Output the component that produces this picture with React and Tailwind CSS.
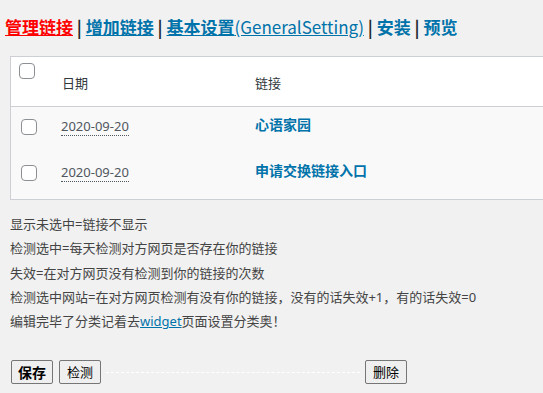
import React from "react";

const font = { fontFamily: '"Noto Sans", "Noto Sans CJK SC", sans-serif' };
const titleFont = { fontFamily: '"Noto Sans CJK SC", "Noto Sans", sans-serif' };

function Box({ className = "" }) {
  return (
    <span
      className={
        "block w-[16px] h-[16px] rounded-[4px] border border-[#8c8f94] bg-white " +
        className
      }
    />
  );
}

function Row({ date, title }) {
  return (
    <div className="flex h-[46px] bg-[#f9f9f9]">
      <div className="w-[50px] pl-[10px] pt-[12px]">
        <Box />
      </div>
      <div className="w-[194px] pt-[9px] text-[13px] leading-[20px] text-[#50575e]">
        <span className="border-b border-dotted border-[#50575e]">{date}</span>
      </div>
      <div className="pt-[8px] text-[14px] leading-[20px] font-bold text-[#0073aa]">
        {title}
      </div>
    </div>
  );
}

export default function App() {
  return (
    <div className="min-h-[393px] bg-[#f1f1f1] text-[#444]" style={font}>
      <div
        className="pl-[5px] pt-[15px] h-[56px] text-[17px] leading-[24px] font-semibold text-[#23282d]"
        style={titleFont}
      >
        <a className="text-[#ff0000] underline">管理链接</a>
        <span> | </span>
        <a className="text-[#0073aa] underline">增加链接</a>
        <span> | </span>
        <a className="text-[#0073aa] underline">
          基本设置<span className="font-normal">(GeneralSetting)</span>
        </a>
        <span> | </span>
        <a className="text-[#0073aa]">安装</a>
        <span> | </span>
        <a className="text-[#0073aa]">预览</a>
      </div>

      <div className="ml-[10px] w-[600px] border border-[#ccd0d4] bg-white">
        <div className="flex h-[50px] bg-white border-b border-[#ccd0d4]">
          <div className="w-[51px] pl-[8px] pt-[6px]">
            <Box />
          </div>
          <div className="w-[193px] pt-[16px] text-[13px] leading-[20px] text-[#32373c]">
            日期
          </div>
          <div className="pt-[16px] text-[13px] leading-[20px] text-[#32373c]">链接</div>
        </div>
        <Row date="2020-09-20" title="心语家园" />
        <Row date="2020-09-20" title="申请交换链接入口" />
      </div>

      <div className="pl-[10px] pt-[12px] text-[13px] leading-[24.3px] text-[#444]">
        <div>显示未选中=链接不显示</div>
        <div>检测选中=每天检测对方网页是否存在你的链接</div>
        <div>失效=在对方网页没有检测到你的链接的次数</div>
        <div>检测选中网站=在对方网页检测有没有你的链接，没有的话失效+1，有的话失效=0</div>
        <div>
          编辑完毕了分类记着去<a className="text-[#0073aa] underline">widget</a>页面设置分类奥！
        </div>
      </div>

      <div className="flex items-center pl-[11px] pt-[27px]">
        <button className="h-[24px] w-[42px] rounded-[2px] border border-[#767676] bg-[#efefef] text-[14px] font-bold text-black">
          保存
        </button>
        <button className="ml-[6px] h-[24px] w-[42px] rounded-[2px] border border-[#767676] bg-[#efefef] text-[13px] text-black">
          检测
        </button>
        <div className="ml-[5px] w-[254px] border-t border-dashed border-white" />
        <button className="ml-[5px] h-[24px] w-[42px] rounded-[2px] border border-[#767676] bg-[#efefef] text-[13px] text-black">
          删除
        </button>
      </div>
    </div>
  );
}
